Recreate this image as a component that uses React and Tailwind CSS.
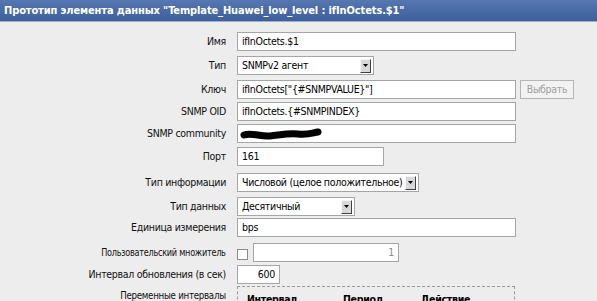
const Arrow = () => (
  <span className="ml-auto mr-[2px] flex h-[14px] w-[11px] shrink-0 items-center justify-center border border-t-[#f5f5f5] border-l-[#f5f5f5] border-r-[#404040] border-b-[#404040] bg-[#d8d8d8]">
    <svg width="5" height="3" viewBox="0 0 5 3">
      <path d="M0 0h5L2.5 3z" fill="#000" />
    </svg>
  </span>
);

const Input = ({ w, value, right, grey, children }) => (
  <div
    className={`flex h-[19px] items-center border border-[#a5a5a5] bg-white px-[4px] ${
      right ? "justify-end" : ""
    } ${grey ? "text-[#8a8a8a]" : "text-black"}`}
    style={{ width: w }}
  >
    {value}
    {children}
  </div>
);

const Select = ({ w, value }) => (
  <div
    className="flex h-[19px] items-center gap-[3px] border border-[#a5a5a5] bg-white pl-[4px] text-black"
    style={{ width: w }}
  >
    <span className="whitespace-nowrap">{value}</span>
    <Arrow />
  </div>
);

const Row = ({ label, h, narrow = "", children }) => (
  <div className="flex" style={{ height: h }}>
    <div className="w-[226px] whitespace-nowrap pt-[3px] text-right text-[#111]">
      <span className={`inline-block origin-right ${narrow}`}>{label}</span>
    </div>
    <div className="ml-[11px] flex items-start gap-[4px]">{children}</div>
  </div>
);

export default function App() {
  return (
    <div className="h-[301px] w-[597px] overflow-hidden bg-[#ededed] font-['DejaVu_Sans_Condensed','DejaVu_Sans',sans-serif] text-[10.5px] leading-[13px] tracking-[-0.3px]">
      <div className="flex h-[21px] items-center bg-gradient-to-b from-[#5677b0] to-[#3d5f9b] pl-[4px] text-[11px] font-bold tracking-[-0.12px] text-white">
        Прототип элемента данных "Template_Huawei_low_level : ifInOctets.$1"
      </div>
      <div className="h-[1px] bg-[#9fb0cc]" />
      <div className="flex flex-col pt-[10px]">
        <Row label="Имя" h={24}>
          <Input w={279} value="ifInOctets.$1" />
        </Row>
        <Row label="Тип" h={24}>
          <Select w={137} value="SNMPv2 агент" />
        </Row>
        <Row label="Ключ" h={22}>
          <Input w={279} value={'ifInOctets["{#SNMPVALUE}"]'} />
          <div className="flex h-[19px] w-[54px] items-center justify-center border border-[#b5b5b5] bg-[#f2f2f2] text-[#a0a0a0]">
            Выбрать
          </div>
        </Row>
        <Row label="SNMP OID" h={22}>
          <Input w={279} value="ifInOctets.{#SNMPINDEX}" />
        </Row>
        <Row label="SNMP community" h={23}>
          <Input w={279}>
            <svg width="82" height="14" viewBox="0 0 82 14" className="-ml-[2px]">
              <path
                d="M4 8C12 5 20 10 30 9S48 6 58 7 72 6 78 5"
                stroke="#000"
                strokeWidth="7"
                strokeLinecap="round"
                fill="none"
              />
            </svg>
          </Input>
        </Row>
        <Row label="Порт" h={26}>
          <Input w={147} value="161" />
        </Row>
        <Row label="Тип информации" h={24}>
          <Select value="Числовой (целое положительное)" />
        </Row>
        <Row label="Тип данных" h={21}>
          <Select w={118} value="Десятичный" />
        </Row>
        <Row label="Единица измерения" h={25}>
          <Input w={279} value="bps" />
        </Row>
        <Row label="Пользовательский множитель" h={22} narrow="scale-x-[0.86]">
          <div className="flex items-center gap-[5px]">
            <span className="mt-[4px] h-[11px] w-[11px] border border-[#8c8c8c] bg-white" />
            <Input w={146} value="1" right grey />
          </div>
        </Row>
        <Row label="Интервал обновления (в сек)" h={21}>
          <Input w={43} value="600" right />
        </Row>
        <Row label="Переменные интервалы" h={40} narrow="scale-x-[0.92]">
          <div className="h-[40px] w-[278px] border border-dashed border-[#9a9a9a] pl-[9px] pt-[6px] font-bold text-black">
            <div className="flex">
              <span className="w-[96px]">Интервал</span>
              <span className="w-[78px]">Период</span>
              <span>Действие</span>
            </div>
          </div>
        </Row>
      </div>
    </div>
  );
}
